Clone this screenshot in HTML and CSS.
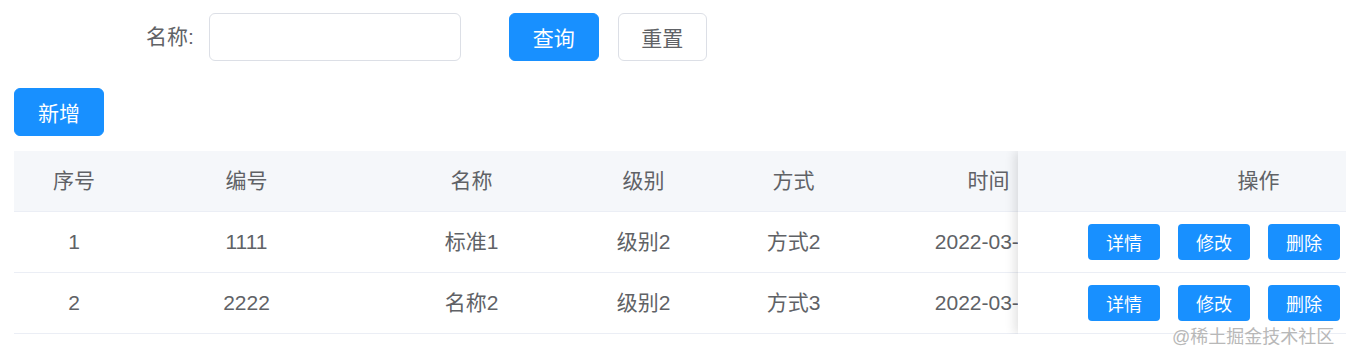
FILE: index.html
```html
<html lang="zh-CN">
<head>
  <meta charset="UTF-8" />
  <meta name="viewport" content="width=device-width, initial-scale=1.0"/>
  <title>列表</title>
  <link rel="stylesheet" href="styles.css">
</head>
<body>
  <div class="page">

    <!-- 搜索栏 -->
    <div class="search">
      <label class="search-label">名称:</label>
      <input class="search-input" type="text" />
      <button class="btn btn-primary query">查询</button>
      <button class="btn btn-default reset">重置</button>
    </div>

    <!-- 工具栏 -->
    <div class="toolbar">
      <button class="btn btn-primary">新增</button>
    </div>

    <!-- 表格 -->
    <div class="table">
      <div class="table-main">
        <div class="tr th">
          <div class="td">序号</div>
          <div class="td">编号</div>
          <div class="td">名称</div>
          <div class="td">级别</div>
          <div class="td">方式</div>
          <div class="td">时间</div>
        </div>
        <div class="tr">
          <div class="td">1</div>
          <div class="td">1111</div>
          <div class="td">标准1</div>
          <div class="td">级别2</div>
          <div class="td">方式2</div>
          <div class="td">2022-03-01</div>
        </div>
        <div class="tr">
          <div class="td">2</div>
          <div class="td">2222</div>
          <div class="td">名称2</div>
          <div class="td">级别2</div>
          <div class="td">方式3</div>
          <div class="td">2022-03-01</div>
        </div>
      </div>

      <div class="table-fixed">
        <div class="tr th"><div class="td">操作</div></div>
        <div class="tr">
          <div class="ops">
            <button class="btn-mini">详情</button>
            <button class="btn-mini">修改</button>
            <button class="btn-mini">删除</button>
          </div>
        </div>
        <div class="tr">
          <div class="ops">
            <button class="btn-mini">详情</button>
            <button class="btn-mini">修改</button>
            <button class="btn-mini">删除</button>
          </div>
        </div>
      </div>
    </div>

    <div class="watermark">@稀土掘金技术社区</div>
  </div>
</body>
</html>
```

FILE: styles.css
```css
:root {
  --primary: #1890ff;
  --text: #606266;
  --border: #ebeef5;
  --head-bg: #f5f7fa;
}

body {
  margin: 0;
  font-family: "Liberation Sans", "Noto Sans CJK SC", sans-serif;
  color: var(--text);
  background: #fff;
}

.page {
  position: relative;
  padding: 13px 0 0 14px;
}

.search {
  display: flex;
  align-items: center;
  height: 48px;
  padding-left: 132px;
}

.search-label {
  font-size: 21px;
  line-height: 48px;
  margin-right: 15px;
}

.search-input {
  box-sizing: border-box;
  width: 252px;
  height: 48px;
  border: 1px solid #dcdfe6;
  border-radius: 6px;
  outline: none;
  font-size: 21px;
  padding: 0 15px;
}

.btn {
  box-sizing: border-box;
  width: 90px;
  height: 48px;
  border-radius: 6px;
  font-family: inherit;
  font-size: 21px;
  cursor: pointer;
  padding: 0;
}

.btn-primary {
  background: var(--primary);
  border: 1px solid var(--primary);
  color: #fff;
}

.btn-default {
  background: #fff;
  border: 1px solid #dcdfe6;
  color: var(--text);
}

.query {
  margin-left: 48px;
}

.reset {
  margin-left: 19px;
  width: 89px;
}

.toolbar {
  margin-top: 27px;
  height: 48px;
}

.table {
  margin-top: 15px;
  display: flex;
  overflow: hidden;
  font-size: 21px;
}

.table-main {
  flex: none;
  width: 1004px;
  overflow: hidden;
}

.table-main .tr {
  display: grid;
  grid-template-columns: 120px 225px 225px 119px 181px 209px;
  width: 1079px;
}

.tr {
  box-sizing: border-box;
  height: 61px;
  border-bottom: 1px solid var(--border);
  display: flex;
  align-items: center;
}

.th {
  background: var(--head-bg);
}

.td {
  text-align: center;
  white-space: nowrap;
  line-height: 30px;
}

.table-fixed {
  position: relative;
  flex: none;
  width: 481px;
  background: #fff;
  box-shadow: -3px 0 10px rgba(0, 0, 0, 0.12);
}

.table-fixed .th .td {
  width: 100%;
}

.ops {
  display: flex;
  gap: 18px;
  padding-left: 70px;
}

.btn-mini {
  width: 72px;
  height: 36px;
  border: none;
  border-radius: 4px;
  background: var(--primary);
  color: #fff;
  font-family: inherit;
  font-size: 18px;
  padding: 0;
  cursor: pointer;
}

.watermark {
  position: absolute;
  left: 1172px;
  top: 326px;
  font-size: 18px;
  line-height: 22px;
  color: #b8b8b8;
  text-shadow: 0 0 2px #fff;
  white-space: nowrap;
}
```
